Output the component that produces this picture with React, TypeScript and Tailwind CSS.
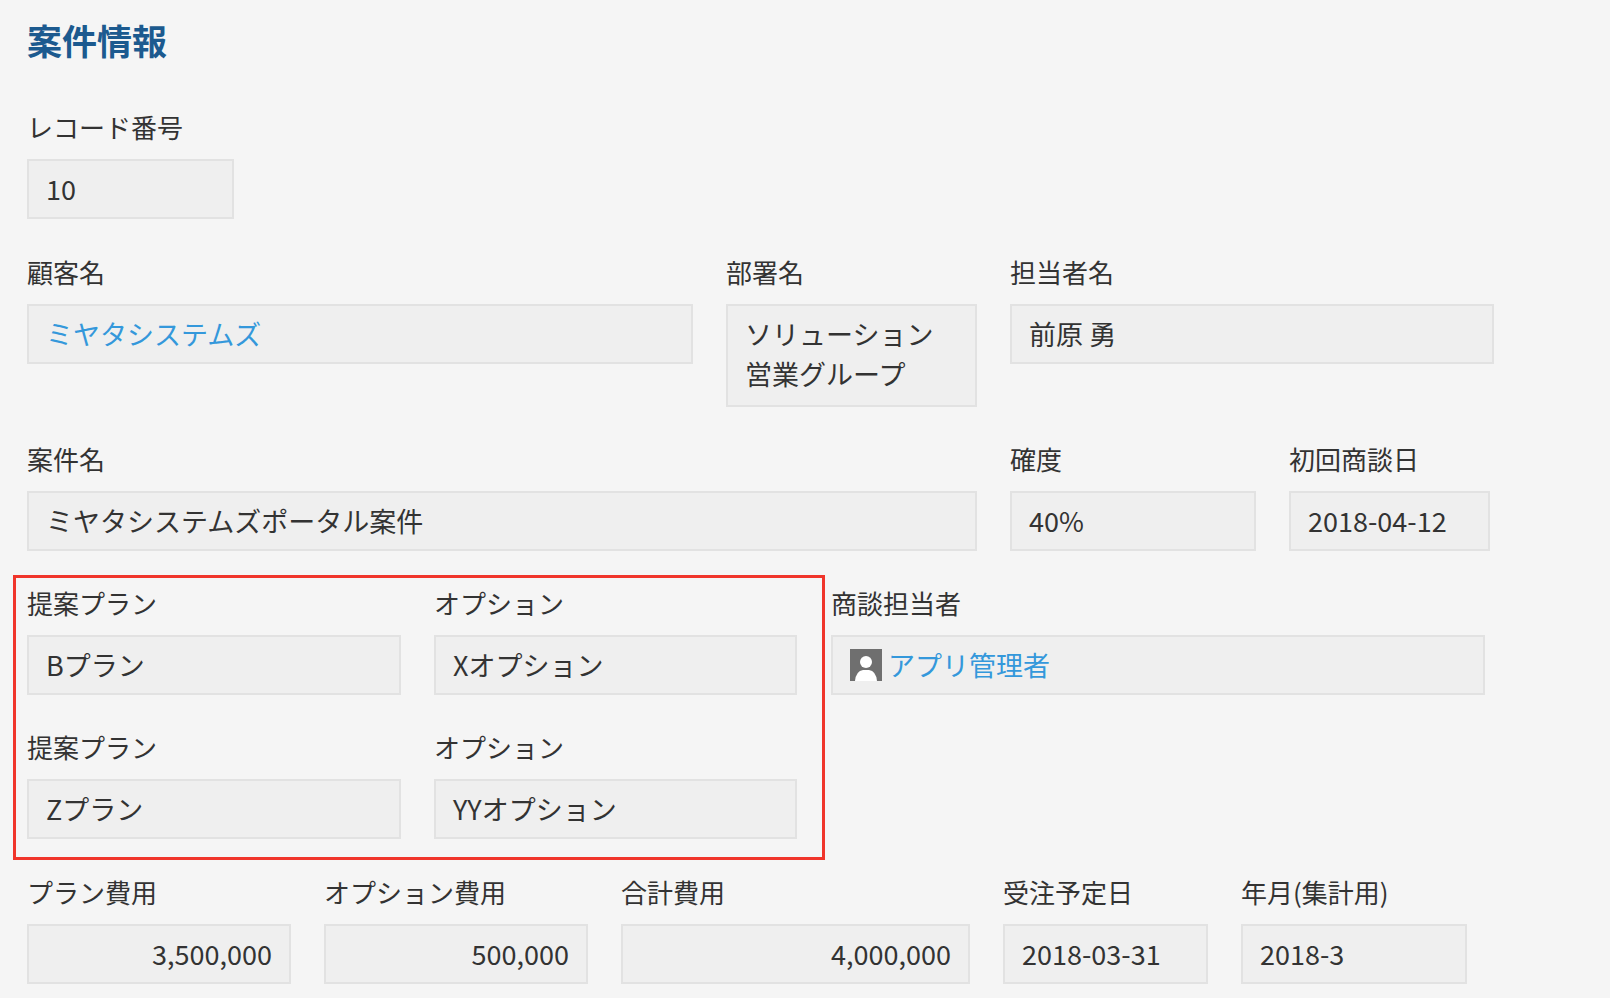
import React from "react";

const F = "'Noto Sans CJK JP', 'Noto Sans', sans-serif";

function Field({ label, w, h = "h-[60px]", children, right = false, link = false }: { label: string; w: string; h?: string; children: React.ReactNode; right?: boolean; link?: boolean }) {
  return (
    <div className={`flex flex-col ${w} shrink-0`}>
      <div className="h-[36px] leading-[36px] text-[26px] text-[#333] whitespace-nowrap">{label}</div>
      <div className={`mt-[14px] ${h} bg-[#efefef] border-2 border-[#e2e2e2] px-[17px] pt-[8px] text-[27px] leading-[40px] ${right ? "text-right" : ""} ${link ? "text-[#3498db]" : "text-[#333]"}`}>
        {children}
      </div>
    </div>
  );
}

export default function App() {
  return (
    <div className="w-[1610px] h-[998px] bg-[#f5f5f5] overflow-hidden pl-[27px]" style={{ fontFamily: F }}>
      <div className="pt-[16px] h-[109px] text-[35px] font-bold text-[#1c5a8f] leading-[48px]">案件情報</div>
      <Field label="レコード番号" w="w-[207px]">10</Field>
      <div className="flex items-start gap-[33px] mt-[35px]">
        <Field label="顧客名" w="w-[666px]" link>ミヤタシステムズ</Field>
        <Field label="部署名" w="w-[251px]" h="h-[103px]">ソリューション<br />営業グループ</Field>
        <Field label="担当者名" w="w-[484px]">前原 勇</Field>
      </div>
      <div className="flex items-start gap-[33px] mt-[34px]">
        <Field label="案件名" w="w-[950px]">ミヤタシステムズポータル案件</Field>
        <Field label="確度" w="w-[246px]">40%</Field>
        <Field label="初回商談日" w="w-[201px]">2018-04-12</Field>
      </div>
      <div className="flex items-start mt-[24px] -ml-[14px]">
        <div className="border-[3px] border-[#f0352b] pl-[11px] pt-[7px] pr-[25px] pb-[18px] shrink-0">
          <div className="flex gap-[33px]">
            <Field label="提案プラン" w="w-[374px]">Bプラン</Field>
            <Field label="オプション" w="w-[363px]">Xオプション</Field>
          </div>
          <div className="flex gap-[33px] mt-[34px]">
            <Field label="提案プラン" w="w-[374px]">Zプラン</Field>
            <Field label="オプション" w="w-[363px]">YYオプション</Field>
          </div>
        </div>
        <div className="ml-[6px] pt-[10px]">
          <Field label="商談担当者" w="w-[654px]" link>
            <span className="inline-flex items-center gap-[6px]">
              <span className="w-[32px] h-[32px] bg-[#6f6f6f] inline-flex items-end justify-center overflow-hidden">
                <svg width="26" height="28" viewBox="0 0 26 28">
                  <circle cx="13" cy="9" r="6" fill="#fff" />
                  <path d="M2 28 Q3 18 10 17 L16 17 Q23 18 24 28 Z" fill="#fff" />
                </svg>
              </span>
              アプリ管理者
            </span>
          </Field>
        </div>
      </div>
      <div className="flex items-start gap-[33px] mt-[14px]">
        <Field label="プラン費用" w="w-[264px]" right>3,500,000</Field>
        <Field label="オプション費用" w="w-[264px]" right>500,000</Field>
        <Field label="合計費用" w="w-[349px]" right>4,000,000</Field>
        <Field label="受注予定日" w="w-[205px]">2018-03-31</Field>
        <Field label="年月(集計用)" w="w-[226px]">2018-3</Field>
      </div>
    </div>
  );
}
